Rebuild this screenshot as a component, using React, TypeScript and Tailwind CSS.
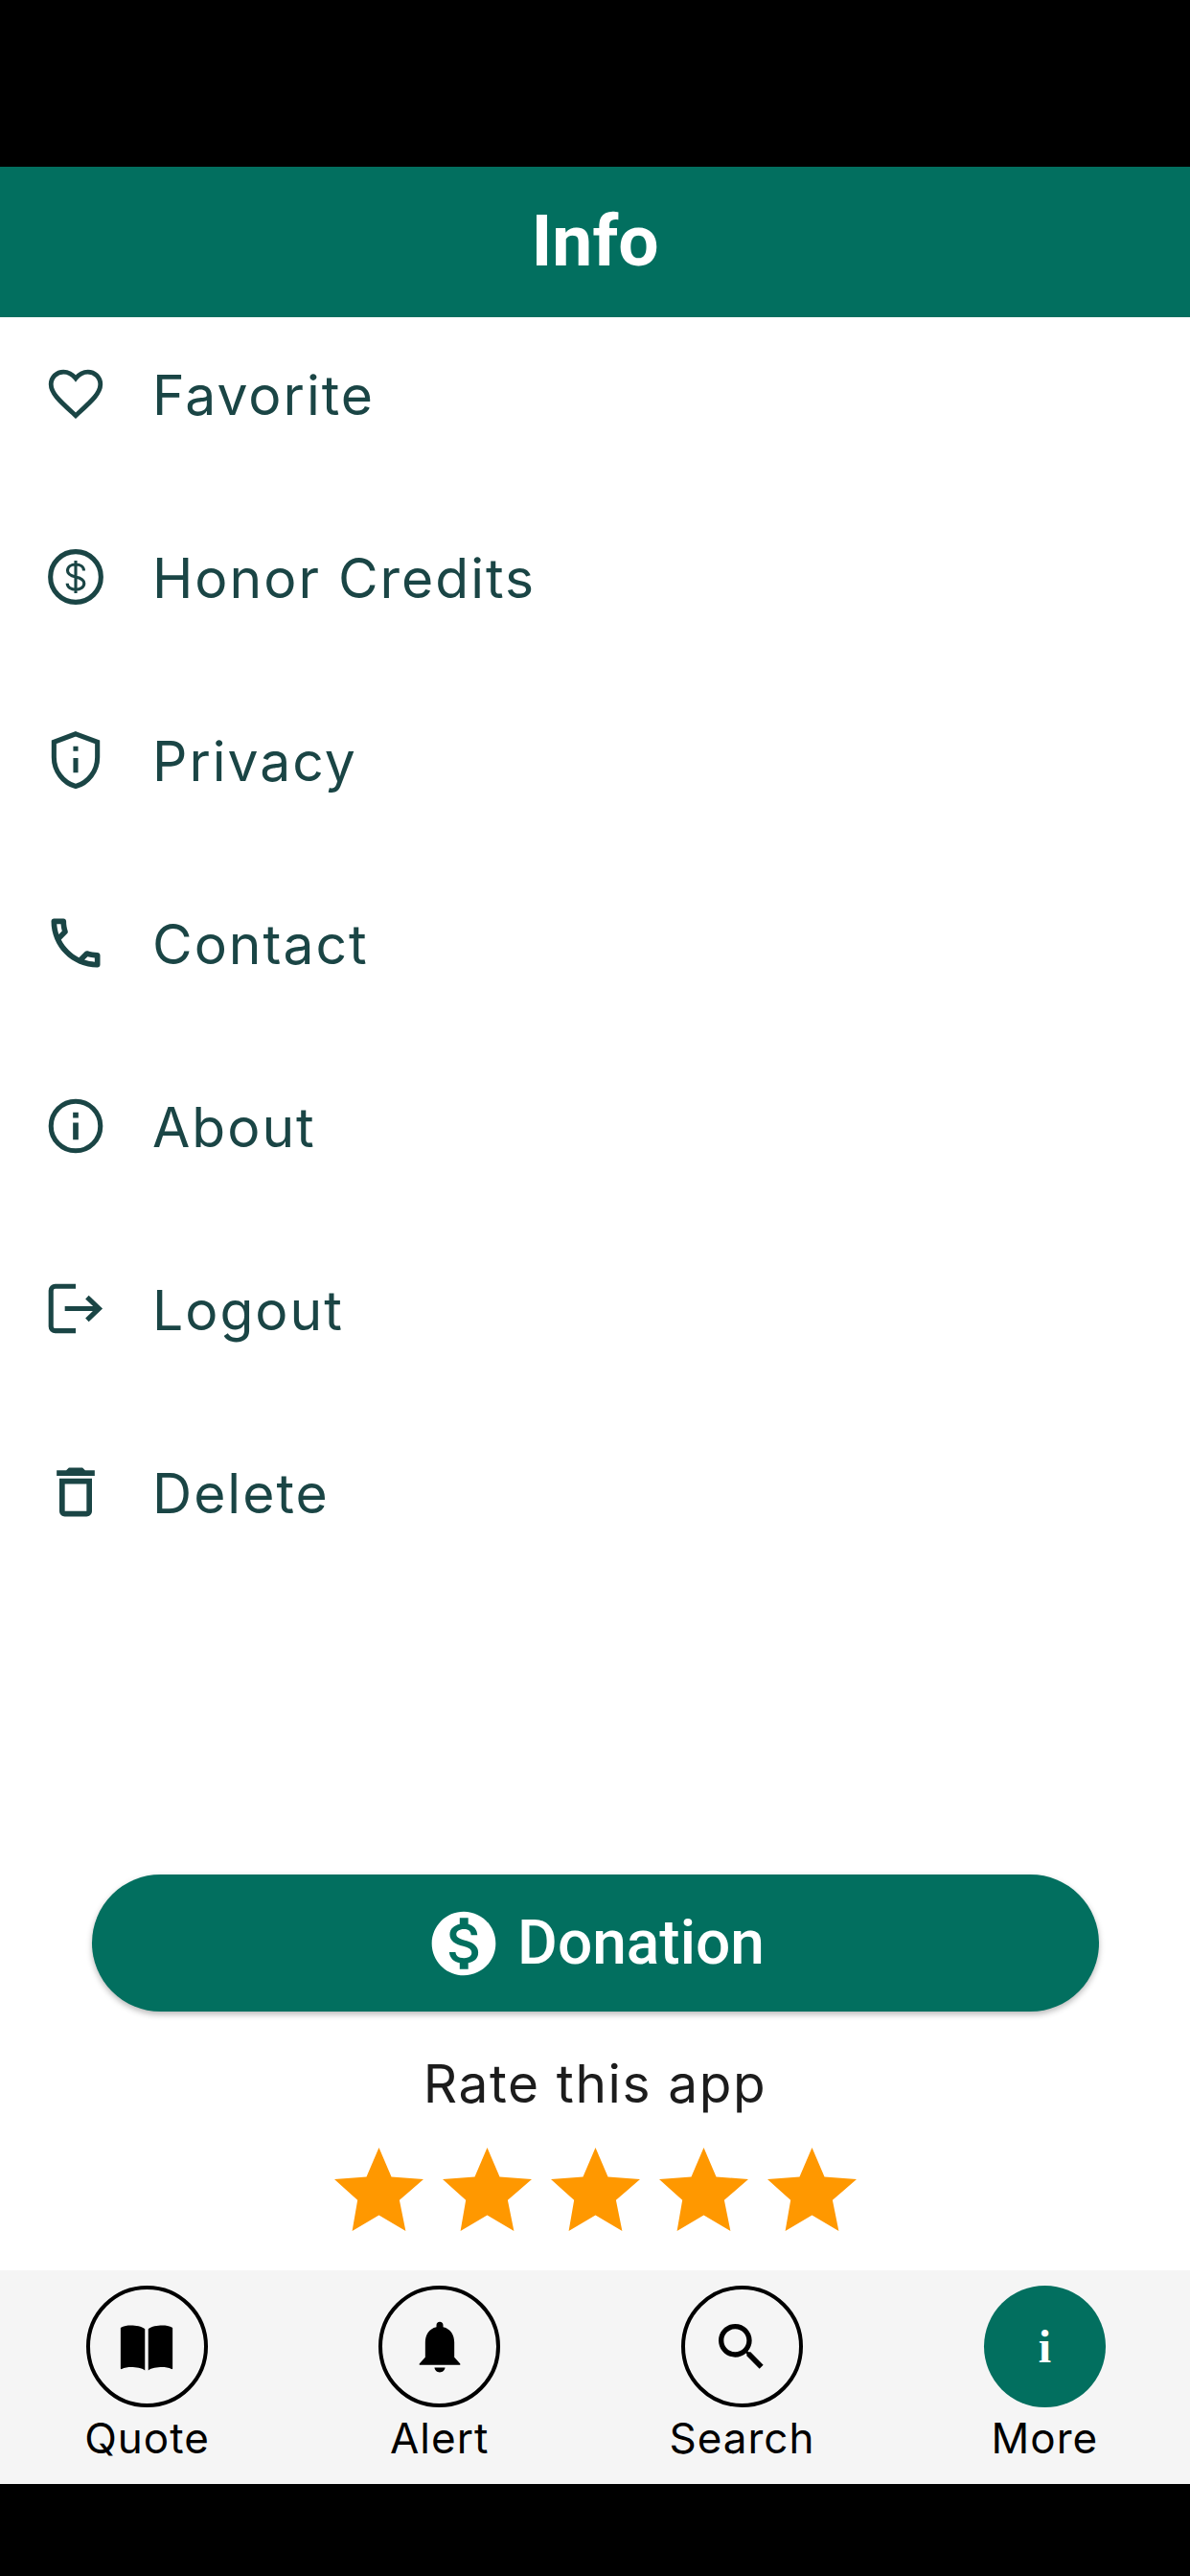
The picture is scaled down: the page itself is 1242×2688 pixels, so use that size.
import type { ReactNode } from "react";

const INK = "#1a4545";

function Glyph({ children, fill = true }: { children: ReactNode; fill?: boolean }) {
  return (
    <svg
      viewBox="0 0 24 24"
      className="size-[68px] shrink-0"
      fill={fill ? INK : "none"}
      stroke={fill ? "none" : INK}
      strokeWidth={fill ? 0 : 1.8}
      strokeLinejoin="round"
    >
      {children}
    </svg>
  );
}

const rows: { label: string; icon: ReactNode }[] = [
  {
    label: "Favorite",
    icon: (
      <Glyph fill={false}>
        <path
          strokeWidth="1.7"
          strokeLinejoin="miter"
          d="M12 20l-1.1-1C6 14.500 2.900 11.700 2.900 8.500 2.900 5.900 5 3.900 7.500 3.900c1.600 0 3.300.9 4.500 2.400 1.200-1.500 2.900-2.400 4.500-2.400 2.500 0 4.600 2 4.600 4.600 0 3.200-3.100 6-8 10.500z"
        />
      </Glyph>
    ),
  },
  {
    label: "Honor Credits",
    icon: (
      <Glyph fill={false}>
        <circle cx="12" cy="12" r="9.3" />
        <path
          strokeWidth="1.1"
          d="M15 9.700c0-1.400-1.300-2.300-3-2.300s-3 .9-3 2.300c0 1.400 1.300 1.900 3 2.300 1.800.4 3.100 1 3.100 2.400s-1.400 2.300-3.100 2.300-3.100-.9-3.100-2.300M12 6v12"
        />
      </Glyph>
    ),
  },
  {
    label: "Privacy",
    icon: (
      <Glyph fill={false}>
        <path strokeLinejoin="miter" d="M12 2.400 20 5.400V11c0 5-3.400 9.500-8 10.700C7.400 20.500 4 16 4 11V5.400Z" />
        <path fill={INK} stroke="none" d="M11.100 7h1.800v1.700h-1.800zM11.100 11.300h1.800v5.400h-1.800z" />
      </Glyph>
    ),
  },
  {
    label: "Contact",
    icon: (
      <Glyph>
        <path d="M6.54 5c.06.89.21 1.76.45 2.59l-1.2 1.2c-.41-1.2-.67-2.47-.76-3.79h1.51m9.86 12.02c.85.24 1.72.39 2.6.45v1.49c-1.32-.09-2.59-.35-3.8-.75l1.2-1.19M7.5 3H4c-.55 0-1 .45-1 1 0 9.39 7.61 17 17 17 .55 0 1-.45 1-1v-3.49c0-.55-.45-1-1-1-1.24 0-2.45-.2-3.57-.57-.1-.04-.21-.05-.31-.05-.26 0-.51.1-.71.29l-2.2 2.2c-2.83-1.45-5.15-3.76-6.59-6.59l2.2-2.2c.28-.28.36-.67.25-1.02C8.7 6.45 8.5 5.25 8.5 4c0-.55-.45-1-1-1z" />
      </Glyph>
    ),
  },
  {
    label: "About",
    icon: (
      <Glyph fill={false}>
        <circle cx="12" cy="12" r="9.1" />
        <path fill={INK} stroke="none" d="M11 7h2v2h-2zM11 10.800h2v6.200h-2z" />
      </Glyph>
    ),
  },
  {
    label: "Logout",
    icon: (
      <Glyph fill={false}>
        <path d="M12 3.600H4.500a1.600 1.600 0 0 0-1.600 1.600v13.200a1.600 1.600 0 0 0 1.600 1.600H12" />
        <path strokeLinejoin="miter" d="M8 11.800h12.400M16.200 7.600l4.400 4.200-4.400 4.200" />
      </Glyph>
    ),
  },
  {
    label: "Delete",
    icon: (
      <Glyph>
        <path d="M6 19c0 1.1.9 2 2 2h8c1.1 0 2-.9 2-2V7H6v12zM8 9h8v10H8V9zm7.5-5-1-1h-5l-1 1H5v2h14V4h-3.500z" />
      </Glyph>
    ),
  },
];

const STAR_POINTS = "50,0 64,35 100,38 73,63 80,100 50,81 20,100 26,63 0,38 36,35";

function Star() {
  return (
    <svg viewBox="0 0 100 100" preserveAspectRatio="none" className="h-[87px] w-[93px]" fill="#ff9800">
      <polygon points={STAR_POINTS} />
    </svg>
  );
}

function Tab({ label, active, children }: { label: string; active?: boolean; children: ReactNode }) {
  return (
    <div className="flex flex-col items-center gap-[7px]">
      <div
        className={
          active
            ? "flex size-[127px] items-center justify-center rounded-full bg-[#026f5f]"
            : "flex size-[127px] items-center justify-center rounded-full border-[4px] border-black"
        }
      >
        {children}
      </div>
      <span className="font-['Inter',sans-serif] text-[44px] leading-[50px] tracking-[1px] text-black">{label}</span>
    </div>
  );
}

export default function App() {
  return (
    <div className="flex h-[2688px] w-[1242px] flex-col overflow-hidden bg-black">
      <div className="h-[174px] shrink-0" />
      <header className="flex h-[157px] shrink-0 items-center justify-center bg-[#026f5f]">
        <h1 className="pb-[2px] font-['Roboto',sans-serif] text-[75px] font-bold leading-none text-white">Info</h1>
      </header>

      <main className="flex flex-1 flex-col bg-white">
        <ul className="flex flex-col gap-[95px] pt-[32px]">
          {rows.map((row) => (
            <li key={row.label} className="flex h-[96px] items-center gap-[46px] pl-[45px]">
              {row.icon}
              <span className="pt-[3px] font-['Inter',sans-serif] text-[57px] leading-none tracking-[2px] text-[#1a4545]">
                {row.label}
              </span>
            </li>
          ))}
        </ul>

        <div className="mt-auto flex flex-col items-center pb-[41px]">
          <button className="flex h-[143px] w-[1051px] items-center justify-center gap-[16px] rounded-full bg-[#026f5f] shadow-[0_3px_6px_rgba(0,0,0,0.28)]">
            <svg viewBox="0 0 24 24" className="size-[80px]" fill="#fff">
              <path d="M12 2C6.48 2 2 6.48 2 12s4.48 10 10 10 10-4.48 10-10S17.52 2 12 2zm1.41 16.09V20h-2.67v-1.93c-1.71-.36-3.16-1.46-3.27-3.4h1.96c.1 1.05.82 1.87 2.65 1.87 1.96 0 2.4-.98 2.4-1.59 0-.83-.44-1.61-2.67-2.14-2.48-.6-4.18-1.62-4.18-3.67 0-1.72 1.39-2.84 3.11-3.21V4h2.67v1.95c1.86.45 2.79 1.86 2.85 3.39H14.3c-.05-1.11-.64-1.87-2.22-1.87-1.5 0-2.4.68-2.4 1.64 0 .84.65 1.39 2.67 1.91s4.18 1.39 4.18 3.91c-.01 1.83-1.38 2.83-3.12 3.16z" />
            </svg>
            <span className="font-['Roboto',sans-serif] text-[64px] font-medium leading-none text-white">Donation</span>
          </button>
          <p className="mt-[44px] font-['Inter',sans-serif] text-[55px] leading-[62px] tracking-[1.6px] text-[#1c1c1c]">
            Rate this app
          </p>
          <div className="mt-[36px] flex gap-[20px]">
            <Star />
            <Star />
            <Star />
            <Star />
            <Star />
          </div>
        </div>

        <nav className="flex h-[223px] shrink-0 items-start justify-around bg-[#f5f5f5] pt-[16px]">
          <Tab label="Quote">
            <svg viewBox="0 0 24 24" className="size-[70px]" fill="#000">
              <path d="M11.400 5.600C10.200 4.600 8.200 4.300 6.400 4.300c-1.300 0-2.600.2-3.700.8v14.600c0 .2.2.3.4.2 1-.5 2.300-.7 3.300-.7 1.800 0 3.900.3 5 1.200V5.600ZM12.600 5.600c1.200-1 3.200-1.300 5-1.300 1.300 0 2.600.2 3.700.8v14.600c0 .2-.2.3-.4.2-1-.5-2.300-.7-3.300-.7-1.800 0-3.900.3-5 1.200V5.600Z" />
            </svg>
          </Tab>
          <Tab label="Alert">
            <svg viewBox="0 0 24 24" className="size-[70px]" fill="#000">
              <path d="M12 3c-.7 0-1.200.5-1.200 1.200v.7C8.100 5.500 6.800 7.700 6.800 10.400v5.300L4.700 18v.4h14.600V18l-2.100-2.300v-5.300c0-2.700-1.300-4.900-4-5.500v-.7C13.200 3.500 12.700 3 12 3ZM10.100 19.400c.1 1 .9 1.700 1.900 1.700s1.800-.7 1.900-1.700h-3.800Z" />
            </svg>
          </Tab>
          <Tab label="Search">
            <svg viewBox="0 0 24 24" className="size-[64px]" fill="#000">
              <path d="M15.500 14h-.79l-.28-.27C15.410 12.590 16 11.110 16 9.500 16 5.910 13.090 3 9.500 3S3 5.910 3 9.500 5.910 16 9.500 16c1.610 0 3.090-.59 4.230-1.570l.27.28v.79l5 4.990L20.490 19l-4.990-5zm-6 0C7.010 14 5 11.990 5 9.500S7.010 5 9.500 5 14 7.010 14 9.500 11.990 14 9.500 14z" />
            </svg>
          </Tab>
          <Tab label="More" active>
            <span className="font-['Liberation_Serif',serif] text-[48px] font-bold leading-none text-white">i</span>
          </Tab>
        </nav>

        <div className="h-[96px] shrink-0 bg-black" />
      </main>
    </div>
  );
}
